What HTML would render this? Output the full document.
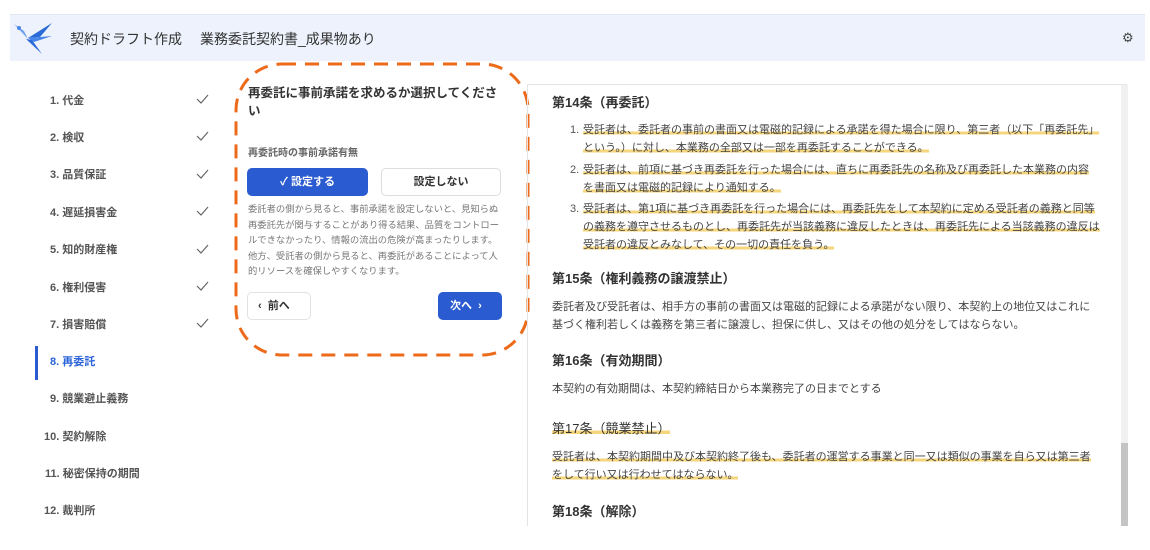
<!DOCTYPE html>
<html><head><meta charset="utf-8"><style>
*{margin:0;padding:0;box-sizing:border-box}
body{width:1150px;height:550px;background:#fff;font-family:"Liberation Sans","Noto Sans CJK JP",sans-serif;color:#333;position:relative;overflow:hidden}
.a{position:absolute;white-space:nowrap}
.hdr{left:10px;top:15px;width:1135px;height:46px;background:#edf2fc}
.nav{left:50px;font-size:11px;font-weight:bold;color:#555}
.panel{left:527px;top:84px;width:600px;height:442px;border-left:1px solid #e4e4e4;border-top:1px solid #e4e4e4}
.h{font-size:13px;font-weight:bold;color:#333}
.p{font-size:11px;color:#444;line-height:18px}
.hl{background:linear-gradient(transparent 62%,#f6d67c 62%,#f6d67c 88%,transparent 88%)}
</style></head><body>
<div class="a" style="left:10px;top:14px;width:1135px;height:1px;background:#e2e6ee"></div>
<div class="a hdr"></div>
<svg class="a" style="left:12px;top:20px" width="44" height="36" viewBox="0 0 44 36">
<path d="M40 3 L16 18 L28 17 Z" fill="#2a6bd8"/>
<path d="M16 18 L40 16 L22 22 Z" fill="#4a86e8"/>
<path d="M14 19 L30 34 L20 20 Z" fill="#2a6bd8"/>
<path d="M2 4 L16 19 L12 11 Z" fill="#6ca2ec"/>
<circle cx="7" cy="8" r="2" fill="#4a86e8"/>
</svg>
<div class="a" style="left:70px;top:29px;font-size:14px;color:#333">契約ドラフト作成</div>
<div class="a" style="left:200px;top:29px;font-size:14px;color:#333">業務委託契約書_成果物あり</div>
<div class="a" style="left:1122px;top:30px;font-size:13px;color:#444">⚙</div>

<div class="a nav" style="top:92px">1. 代金</div>
<div class="a nav" style="top:129px">2. 検収</div>
<div class="a nav" style="top:166px">3. 品質保証</div>
<div class="a nav" style="top:204px">4. 遅延損害金</div>
<div class="a nav" style="top:241px">5. 知的財産権</div>
<div class="a nav" style="top:279px">6. 権利侵害</div>
<div class="a nav" style="top:316px">7. 損害賠償</div>
<div class="a" style="left:35px;top:346px;width:3px;height:34px;background:#2a5bd0"></div>
<div class="a nav" style="top:353px;color:#2a62d8">8. 再委託</div>
<div class="a nav" style="top:390px">9. 競業避止義務</div>
<div class="a nav" style="top:428px;left:44px">10. 契約解除</div>
<div class="a nav" style="top:465px;left:45px">11. 秘密保持の期間</div>
<div class="a nav" style="top:502px;left:44px">12. 裁判所</div>
<svg class="a" style="left:0;top:0" width="230" height="340"><g fill="none" stroke="#666" stroke-width="1.2">
<path d="M197 99l4 4 7-8"/><path d="M197 136l4 4 7-8"/><path d="M197 174l4 4 7-8"/><path d="M197 211l4 4 7-8"/><path d="M197 249l4 4 7-8"/><path d="M197 286l4 4 7-8"/><path d="M197 323l4 4 7-8"/></g></svg>

<svg class="a" style="left:230px;top:58px" width="305" height="302"><rect x="6" y="6" width="292" height="291" rx="46" fill="none" stroke="#ec6a1a" stroke-width="3" stroke-dasharray="14 9"/></svg>
<div class="a" style="left:248px;top:84px;font-size:12.5px;font-weight:bold;line-height:18px;color:#333;white-space:normal;width:260px">再委託に事前承諾を求めるか選択してください</div>
<div class="a" style="left:248px;top:144px;font-size:10px;color:#666;font-weight:bold">再委託時の事前承諾有無</div>
<div class="a" style="left:247px;top:168px;width:121px;height:28px;background:#2a5bd0;border-radius:5px;color:#fff;font-size:11px;font-weight:bold;text-align:center;line-height:28px">✓ 設定する</div>
<div class="a" style="left:381px;top:168px;width:120px;height:28px;border:1px solid #ddd;border-radius:5px;color:#333;font-size:11px;font-weight:bold;text-align:center;line-height:26px">設定しない</div>
<div class="a" style="left:248px;top:202px;font-size:9.3px;color:#777;line-height:15.5px">委託者の側から見ると、事前承諾を設定しないと、見知らぬ<br>再委託先が関与することがあり得る結果、品質をコントロー<br>ルできなかったり、情報の流出の危険が高まったりします。<br>他方、受託者の側から見ると、再委託があることによって人<br>的リソースを確保しやすくなります。</div>
<div class="a" style="left:247px;top:292px;width:64px;height:28px;border:1px solid #e2e2e2;border-radius:5px;font-size:11px;font-weight:bold;line-height:26px;padding-left:10px">‹ &nbsp;前へ</div>
<div class="a" style="left:438px;top:292px;width:64px;height:28px;background:#2a5bd0;border-radius:5px;color:#fff;font-size:11px;font-weight:bold;line-height:28px;padding-left:12px">次へ &nbsp;›</div>

<div class="a panel"></div>
<div class="a" style="left:1121px;top:85px;width:7px;height:441px;background:#f1f1f1"></div>
<div class="a" style="left:1121px;top:443px;width:7px;height:83px;background:#c4c4c4"></div>

<div class="a h" style="left:552px;top:92px">第14条（再委託）</div>
<div class="a p" style="left:570px;top:121px;color:#555">1.</div>
<div class="a p" style="left:583px;top:121px"><span class="hl">受託者は、委託者の事前の書面又は電磁的記録による承諾を得た場合に限り、第三者（以下「再委託先」</span><br><span class="hl">という。）に対し、本業務の全部又は一部を再委託することができる。</span></div>
<div class="a p" style="left:570px;top:161px;color:#555">2.</div>
<div class="a p" style="left:583px;top:161px"><span class="hl">受託者は、前項に基づき再委託を行った場合には、直ちに再委託先の名称及び再委託した本業務の内容</span><br><span class="hl">を書面又は電磁的記録により通知する。</span></div>
<div class="a p" style="left:570px;top:200px;color:#555">3.</div>
<div class="a p" style="left:583px;top:200px"><span class="hl">受託者は、第1項に基づき再委託を行った場合には、再委託先をして本契約に定める受託者の義務と同等</span><br><span class="hl">の義務を遵守させるものとし、再委託先が当該義務に違反したときは、再委託先による当該義務の違反は</span><br><span class="hl">受託者の違反とみなして、その一切の責任を負う。</span></div>
<div class="a h" style="left:552px;top:268px">第15条（権利義務の譲渡禁止）</div>
<div class="a p" style="left:552px;top:298px">委託者及び受託者は、相手方の事前の書面又は電磁的記録による承諾がない限り、本契約上の地位又はこれに<br>基づく権利若しくは義務を第三者に譲渡し、担保に供し、又はその他の処分をしてはならない。</div>
<div class="a h" style="left:552px;top:350px">第16条（有効期間）</div>
<div class="a p" style="left:552px;top:380px">本契約の有効期間は、本契約締結日から本業務完了の日までとする</div>
<div class="a h" style="left:552px;top:418px;font-weight:normal"><span class="hl">第17条（競業禁止）</span></div>
<div class="a p" style="left:552px;top:448px"><span class="hl">受託者は、本契約期間中及び本契約終了後も、委託者の運営する事業と同一又は類似の事業を自ら又は第三者</span><br><span class="hl">をして行い又は行わせてはならない。</span></div>
<div class="a h" style="left:552px;top:501px">第18条（解除）</div>
</body></html>
